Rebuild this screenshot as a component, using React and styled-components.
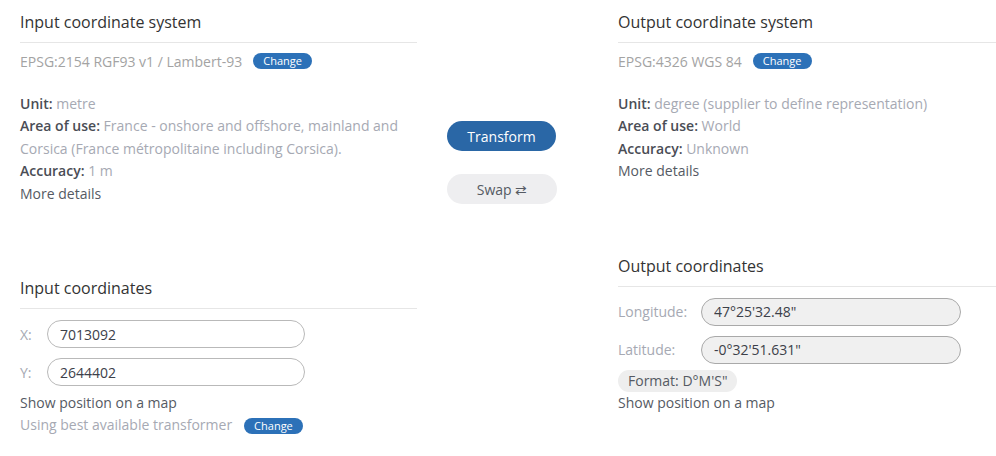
import React from "react"
import styled, { createGlobalStyle } from "styled-components"

const Global = createGlobalStyle`
  html, body {
    margin: 0;
    padding: 0;
    background: #fff;
    font-family: "Open Sans", "Liberation Sans", sans-serif;
    overflow: hidden;
  }
`

const Page = styled.div`
  display: grid;
  grid-template-columns: 397px 201px 1fr;
  padding-left: 20px;
  width: 996px;
  box-sizing: border-box;
`

const Column = styled.div`
  display: flex;
  flex-direction: column;
  min-width: 0;
`

const Middle = styled.div`
  display: flex;
  flex-direction: column;
  align-items: flex-start;
  gap: 23px;
  padding: 121px 0 0 30px;
`

const Heading = styled.h2`
  margin: 0;
  padding: 11px 0 8px;
  font-size: 16px;
  line-height: 23px;
  font-weight: 400;
  color: #333;
  border-bottom: 1px solid #e6e6e6;
  margin-top: ${(p) => (p.$gap ? "61px" : "0")};
`

const CrsRow = styled.div`
  display: flex;
  align-items: center;
  gap: 11px;
  margin-top: 10px;
  height: 16px;
  font-size: 14px;
  color: #a3a3a3;
`

const Badge = styled.button`
  border: 0;
  background: #2c71b8;
  color: #fff;
  font-family: inherit;
  font-size: 11px;
  line-height: 16px;
  height: 16px;
  padding: 0 10px;
  border-radius: 8px;
  cursor: pointer;
`

const Info = styled.div`
  margin-top: 24px;
  font-size: 14px;
  line-height: 22.4px;
  color: #a6a9b3;
`

const Line = styled.div`
  b {
    font-weight: 600;
    color: #4a4d55;
  }
`

const Link = styled.div`
  font-size: 14px;
  line-height: 22.4px;
  color: #555a63;
  margin-top: ${(p) => p.$top || 0}px;
`

const Muted = styled.div`
  display: flex;
  align-items: center;
  gap: 12px;
  font-size: 14px;
  line-height: 22.4px;
  color: #a6a9b3;
`

const Fields = styled.div`
  display: flex;
  flex-direction: column;
  gap: 10px;
  margin-top: 11px;
`

const FieldRow = styled.label`
  display: flex;
  align-items: center;
`

const FieldLabel = styled.span`
  width: ${(p) => p.$w}px;
  font-size: 14px;
  color: #a6a9b3;
`

const Input = styled.input`
  box-sizing: border-box;
  width: ${(p) => p.$w}px;
  height: 28px;
  border: 1px solid ${(p) => (p.readOnly ? "#a9a9a9" : "#b9b9b9")};
  border-radius: 14px;
  padding: 0 12px;
  background: ${(p) => (p.readOnly ? "#f0f0f0" : "#fff")};
  font-family: inherit;
  font-size: 14px;
  color: #3c4049;
  outline: none;
`

const Chip = styled.div`
  align-self: flex-start;
  margin-top: 6px;
  height: 22px;
  line-height: 22px;
  padding: 0 10px;
  border-radius: 11px;
  background: #eeeeee;
  font-size: 14px;
  color: #555a63;
`

const Button = styled.button`
  border: 0;
  width: ${(p) => (p.$primary ? 109 : 110)}px;
  height: 30px;
  border-radius: 15px;
  background: ${(p) => (p.$primary ? "#2a67a6" : "#eeeef0")};
  color: ${(p) => (p.$primary ? "#fff" : "#555a63")};
  font-family: inherit;
  font-size: 14px;
  cursor: pointer;
`

export default function App() {
  return (
    <>
      <Global />
      <Page>
        <Column>
          <Heading>Input coordinate system</Heading>
          <CrsRow>
            EPSG:2154 RGF93 v1 / Lambert-93 <Badge>Change</Badge>
          </CrsRow>
          <Info>
            <Line><b>Unit:</b> metre</Line>
            <Line>
              <b>Area of use:</b> France - onshore and offshore, mainland and Corsica (France
              métropolitaine including Corsica).
            </Line>
            <Line><b>Accuracy:</b> 1 m</Line>
          </Info>
          <Link>More details</Link>

          <Heading $gap>Input coordinates</Heading>
          <Fields>
            <FieldRow>
              <FieldLabel $w={27}>X:</FieldLabel>
              <Input $w={258} defaultValue="7013092" />
            </FieldRow>
            <FieldRow>
              <FieldLabel $w={27}>Y:</FieldLabel>
              <Input $w={258} defaultValue="2644402" />
            </FieldRow>
          </Fields>
          <Link $top={6}>Show position on a map</Link>
          <Muted>
            Using best available transformer <Badge>Change</Badge>
          </Muted>
        </Column>

        <Middle>
          <Button $primary>Transform</Button>
          <Button>Swap ⇄</Button>
        </Middle>

        <Column>
          <Heading>Output coordinate system</Heading>
          <CrsRow>
            EPSG:4326 WGS 84 <Badge>Change</Badge>
          </CrsRow>
          <Info>
            <Line><b>Unit:</b> degree (supplier to define representation)</Line>
            <Line><b>Area of use:</b> World</Line>
            <Line><b>Accuracy:</b> Unknown</Line>
          </Info>
          <Link>More details</Link>

          <Heading $gap>Output coordinates</Heading>
          <Fields>
            <FieldRow>
              <FieldLabel $w={83}>Longitude:</FieldLabel>
              <Input $w={260} readOnly value={"47°25'32.48\""} />
            </FieldRow>
            <FieldRow>
              <FieldLabel $w={83}>Latitude:</FieldLabel>
              <Input $w={260} readOnly value={"-0°32'51.631\""} />
            </FieldRow>
          </Fields>
          <Chip>Format: D°M'S"</Chip>
          <Link>Show position on a map</Link>
        </Column>
      </Page>
    </>
  )
}
